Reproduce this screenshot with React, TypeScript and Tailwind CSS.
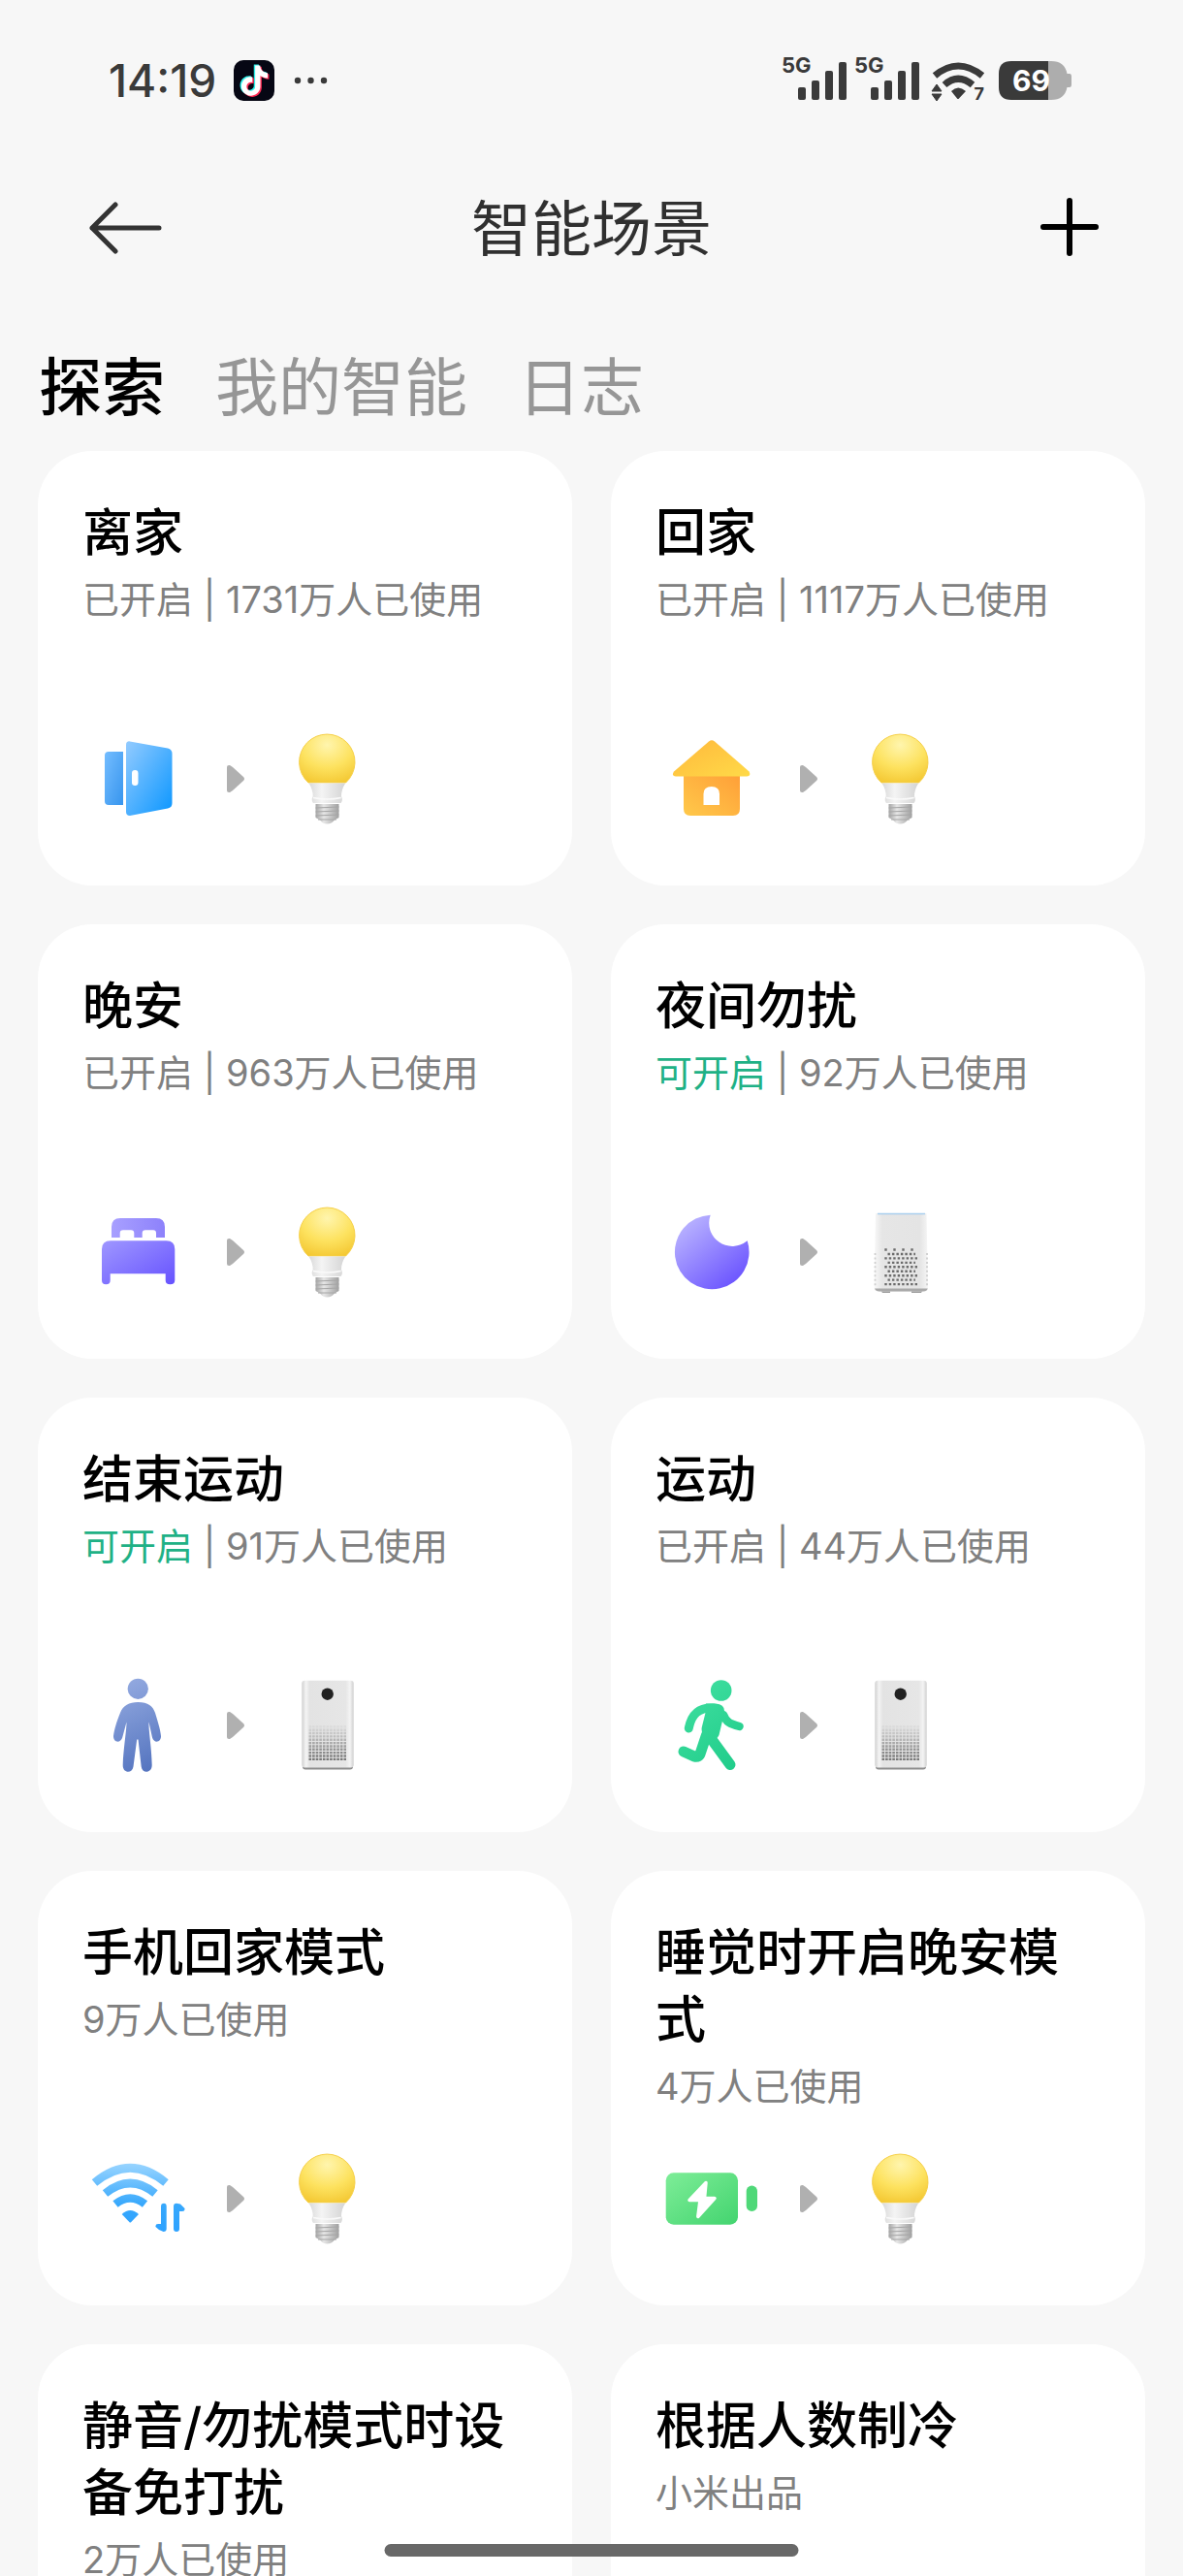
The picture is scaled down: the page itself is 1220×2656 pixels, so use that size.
import { useState, type ReactElement } from 'react'

type IconName =
	| 'door'
	| 'house'
	| 'bed'
	| 'moon'
	| 'person'
	| 'runner'
	| 'wifi'
	| 'battery'
	| 'bulb'
	| 'speaker'
	| 'purifier'

interface Scene {
	id: string
	title: string
	status?: 'on' | 'available'
	note: string
	from: IconName
	to: IconName
}

const tabs = ['探索', '我的智能', '日志']

const scenes: Scene[] = [
	{ id: 'leave', title: '离家', status: 'on', note: '1731万人已使用', from: 'door', to: 'bulb' },
	{ id: 'home', title: '回家', status: 'on', note: '1117万人已使用', from: 'house', to: 'bulb' },
	{ id: 'night', title: '晚安', status: 'on', note: '963万人已使用', from: 'bed', to: 'bulb' },
	{ id: 'dnd', title: '夜间勿扰', status: 'available', note: '92万人已使用', from: 'moon', to: 'speaker' },
	{ id: 'sport-end', title: '结束运动', status: 'available', note: '91万人已使用', from: 'person', to: 'purifier' },
	{ id: 'sport', title: '运动', status: 'on', note: '44万人已使用', from: 'runner', to: 'purifier' },
	{ id: 'phone-home', title: '手机回家模式', note: '9万人已使用', from: 'wifi', to: 'bulb' },
	{ id: 'sleep', title: '睡觉时开启晚安模式', note: '4万人已使用', from: 'battery', to: 'bulb' },
	{ id: 'mute', title: '静音/勿扰模式时设备免打扰', note: '2万人已使用', from: 'moon', to: 'speaker' },
	{ id: 'cooling', title: '根据人数制冷', note: '小米出品', from: 'person', to: 'purifier' }
]

const Door = () => (
	<>
		<defs>
			<linearGradient id="door-front" x1="0" y1="0" x2="1" y2="1">
				<stop offset="0" stopColor="#93cbff" />
				<stop offset="1" stopColor="#0a96ff" />
			</linearGradient>
			<linearGradient id="door-back" x1="0" y1="0" x2="1" y2="1">
				<stop offset="0" stopColor="#74bdff" />
				<stop offset="1" stopColor="#3795ee" />
			</linearGradient>
		</defs>
		<path d="M25 28H40V83H25Q21 83 21 79V32Q21 28 25 28Z" fill="url(#door-back)" />
		<path
			d="M47 17.4L86 24.4Q90.500 25.500 90.500 30V81Q90.500 85.500 86 86.500L47 94Q43 94 43 90V21Q43 17 47 17.400Z"
			fill="url(#door-front)"
		/>
		<rect x="49" y="47" width="6.500" height="16" rx="3.200" fill="#fff" />
	</>
)

const House = () => (
	<>
		<defs>
			<linearGradient id="house-roof" x1="0" y1="0" x2="1" y2="1">
				<stop offset="0" stopColor="#ffb83c" />
				<stop offset="1" stopColor="#ffda48" />
			</linearGradient>
			<linearGradient id="house-wall" x1="1" y1="0" x2="0" y2="1">
				<stop offset="0" stopColor="#ff9f38" />
				<stop offset="1" stopColor="#ffc94a" />
			</linearGradient>
		</defs>
		<path
			d="M27 52H85V87Q85 94 78 94H34Q27 94 27 87Z M47.500 83H64V71.500Q64 64 55.800 64Q47.500 64 47.500 71.500Z"
			fill="url(#house-wall)"
			fillRule="evenodd"
		/>
		<path
			d="M53 17.500Q56 15 59 17.500L94.500 48.500Q97 53 92 53.500H19Q14 53 17 48.500Z"
			fill="url(#house-roof)"
		/>
	</>
)

const Bed = () => (
	<>
		<defs>
			<linearGradient id="bed-fill" x1="0" y1="0" x2="1" y2="1">
				<stop offset="0" stopColor="#9f97ff" />
				<stop offset="1" stopColor="#6652ff" />
			</linearGradient>
			<linearGradient id="bed-head" x1="0" y1="0" x2="1" y2="0">
				<stop offset="0" stopColor="#a8a0ff" />
				<stop offset="1" stopColor="#8d81fb" />
			</linearGradient>
		</defs>
		<path
			d="M28 41V30Q28 21 37 21H74Q83 21 83 30V41H74V36.500Q74 33.300 71 33.300H63Q59.700 33.300 59.700 36.500V41H51.300V36.500Q51.300 33.300 48 33.300H40Q36.700 33.300 36.700 36.500V41Z"
			fill="url(#bed-head)"
		/>
		<path
			d="M18 53Q18 44.300 27 44.300H84.500Q93.300 44.300 93.300 53V85Q93.300 89.300 88.500 89.300Q83.700 89.300 83.700 85V78.300H26.700V85Q26.700 89.300 22.300 89.300Q18 89.300 18 85Z"
			fill="url(#bed-fill)"
		/>
	</>
)

const Moon = () => (
	<>
		<defs>
			<linearGradient id="moon-fill" x1="0.100" y1="0.100" x2="0.800" y2="0.950">
				<stop offset="0" stopColor="#bab4ff" />
				<stop offset="1" stopColor="#6b54ff" />
			</linearGradient>
		</defs>
		<path d="M54.700 17.700A24 24 0 0 0 92.700 44.300A38.300 38.300 0 1 1 54.700 17.700Z" fill="url(#moon-fill)" />
	</>
)

const Person = () => (
	<>
		<defs>
			<linearGradient id="person-fill" x1="30" y1="8" x2="75" y2="104" gradientUnits="userSpaceOnUse">
				<stop offset="0" stopColor="#97ade2" />
				<stop offset="1" stopColor="#5272be" />
			</linearGradient>
		</defs>
		<g fill="url(#person-fill)">
			<circle cx="55.300" cy="18.300" r="10.600" />
			<path d="M55.300 32C66 32 70.500 36 73 43C75.500 51 78.500 61 79 67C79.200 74 71.500 74.500 70 68.500L66.500 52.500C66 60 69.500 80 69.700 97C69.700 105.500 59.500 106 58.700 98.500L55.500 70.500H54.200L50.500 98.500C49.500 106 39.500 105.500 39.700 97C40.200 80 43.500 62 43.500 52.500L39.200 68.500C37.500 74.500 29.800 74 30 67C30.500 61 34 50 37 43C40 35.500 46 32 55.300 32Z" />
		</g>
	</>
)

const Runner = () => (
	<>
		<defs>
			<linearGradient id="runner-fill" x1="20" y1="20" x2="85" y2="100" gradientUnits="userSpaceOnUse">
				<stop offset="0" stopColor="#40dfa0" />
				<stop offset="1" stopColor="#20cc8a" />
			</linearGradient>
		</defs>
		<g fill="none" stroke="url(#runner-fill)" strokeLinecap="round" strokeLinejoin="round">
			<path d="M68 45C71 53 75 54.500 84.500 57" strokeWidth="8.500" />
			<path d="M50.500 66L44.500 84Q43 89.500 38 88L27 83" strokeWidth="11" />
			<path d="M58 38C42 37 35 45 32.300 59" strokeWidth="9" />
			<path d="M52 65L75 96.500" strokeWidth="11" />
		</g>
		<g fill="url(#runner-fill)">
			<circle cx="65.700" cy="20" r="10.800" />
			<path d="M50 33.500H60Q70 34 69 43L63.500 66Q59 75 51 69.500Q44 64 46 57L50 41Z" />
		</g>
	</>
)

const Wifi = () => (
	<>
		<defs>
			<linearGradient id="wifi-fill" x1="0" y1="20" x2="0" y2="90" gradientUnits="userSpaceOnUse">
				<stop offset="0" stopColor="#98d4ff" />
				<stop offset="0.600" stopColor="#37a8fc" />
				<stop offset="1" stopColor="#2ea2ff" />
			</linearGradient>
		</defs>
		<g fill="none" stroke="url(#wifi-fill)" strokeWidth="8.500">
			<path d="M10.500 39.500Q47.300 9 84 39.500" />
			<path d="M21.500 50.500Q47.300 29.500 73 50.500" />
			<path d="M32 61.500Q47.300 49.500 62.500 61.500" />
		</g>
		<g fill="url(#wifi-fill)">
			<path d="M38.700 72Q47.300 64 56 72L48.300 80Q47.300 81 46.300 80Z" />
			<path d="M82 60.700Q84.700 60.700 84.700 64V87Q84.700 90 81.500 90L77 88L73.500 85Q73 82 76 82H79V64Q79 60.700 82 60.700Z" />
			<path d="M92 64Q92 60.700 95 60.700L99 61.500L103.500 66Q104 69 101 69H98V87Q98 90 95 90Q92 90 92 87Z" />
		</g>
	</>
)

const Battery = () => (
	<>
		<defs>
			<linearGradient id="battery-fill" x1="0" y1="0" x2="1" y2="1">
				<stop offset="0" stopColor="#7eed98" />
				<stop offset="1" stopColor="#43d46f" />
			</linearGradient>
		</defs>
		<rect x="8.700" y="29.300" width="74.300" height="53.400" rx="8" fill="url(#battery-fill)" />
		<rect x="91.700" y="42.500" width="11.300" height="26.500" rx="5.600" fill="#4fd878" />
		<path
			d="M50 39.500L33 57.500H44L41.800 74.500L59 55.500H48.500Z"
			fill="#fff"
			stroke="#fff"
			strokeWidth="3.500"
			strokeLinejoin="round"
		/>
	</>
)

const Bulb = () => (
	<>
		<defs>
			<radialGradient id="bulb-glass" cx="0.500" cy="0.220" r="0.850">
				<stop offset="0" stopColor="#fff5ae" />
				<stop offset="0.550" stopColor="#fde25f" />
				<stop offset="1" stopColor="#f3c630" />
			</radialGradient>
			<linearGradient id="bulb-collar" x1="0" y1="0" x2="1" y2="0">
				<stop offset="0" stopColor="#d9d9d9" />
				<stop offset="0.350" stopColor="#f4f4f4" />
				<stop offset="1" stopColor="#d4d4d4" />
			</linearGradient>
			<linearGradient id="bulb-screw" x1="0" y1="0" x2="1" y2="0">
				<stop offset="0" stopColor="#a5a5a5" />
				<stop offset="0.350" stopColor="#e6e6e6" />
				<stop offset="1" stopColor="#a0a0a0" />
			</linearGradient>
		</defs>
		<path d="M37 60A28.700 28.700 0 1 1 75.600 60Z" fill="url(#bulb-glass)" stroke="#f6d04a" strokeWidth="1" />
		<path d="M37.500 60.500H75.200Q71 67 71 74Q73 78 70.500 81H42Q39.500 78 41.700 74Q41.700 67 37.500 60.500Z" fill="url(#bulb-collar)" />
		<path d="M42 75.500Q56.300 78.500 70.700 75.500" fill="none" stroke="#fafafa" strokeWidth="1.500" />
		<path d="M44.500 82H68.500V96L64 98.500Q61 102.500 56.300 102.500Q52 102.500 49 98.500L44.500 96Z" fill="url(#bulb-screw)" />
		<path d="M44.500 86L68.500 85M44.500 90L68.500 89M44.500 94L68.500 93M47 98H66" stroke="#a6a6a6" strokeWidth="1" />
	</>
)

const speakerRows = [0, 1, 2, 3, 4, 5, 6, 7, 8]

const Speaker = () => (
	<>
		<defs>
			<linearGradient id="speaker-body" x1="0" y1="0" x2="1" y2="0">
				<stop offset="0" stopColor="#f8f8f8" />
				<stop offset="0.150" stopColor="#e6e6e6" />
				<stop offset="0.850" stopColor="#e4e4e4" />
				<stop offset="1" stopColor="#f6f6f6" />
			</linearGradient>
		</defs>
		<path d="M36 95H46V98H38ZM68 95H80L78 98H68Z" fill="#9b9b9b" />
		<path d="M31 16H83.500L85 93Q85 96.500 81 96.500H34Q29.500 96.500 29.500 93Z" fill="url(#speaker-body)" />
		<path d="M30 93.500Q31 96.500 35 96.500H80Q84 96.500 84.700 93.500Z" fill="#a9a9a9" />
		<path d="M33 16.500H82" stroke="#a9cfee" strokeWidth="1.500" />
		{speakerRows.map((row) => (
			<path
				key={row}
				d={`M${row % 2 ? 43.500 : 40.300} ${53.500 + row * 4.450}H${row % 2 ? 72 : 75}`}
				stroke="#6b6b6b"
				strokeWidth="2.400"
				strokeDasharray={row === 0 ? '2.400 6.600' : '2.400 2.070'}
			/>
		))}
		<path d="M30.500 57V92M84 57V92" stroke="#cfcfcf" strokeWidth="1.800" strokeDasharray="2 2.450" />
	</>
)

const grilleLines = [0, 1, 2, 3, 4, 5, 6, 7, 8, 9, 10, 11]

const Purifier = () => (
	<>
		<defs>
			<linearGradient id="purifier-body" x1="0" y1="0" x2="1" y2="0">
				<stop offset="0" stopColor="#d0d0d0" />
				<stop offset="0.080" stopColor="#f4f4f4" />
				<stop offset="0.150" stopColor="#e3e3e3" />
				<stop offset="0.850" stopColor="#e6e6e6" />
				<stop offset="0.930" stopColor="#f4f4f4" />
				<stop offset="1" stopColor="#cfcfcf" />
			</linearGradient>
		</defs>
		<rect x="31" y="92" width="52" height="9.500" rx="3" fill="#8d8d8d" />
		<rect x="30.300" y="9.700" width="53.400" height="89.800" rx="3" fill="url(#purifier-body)" />
		<circle cx="56.700" cy="23.700" r="6.200" fill="#222" />
		{grilleLines.map((line) => (
			<path
				key={line}
				d={`M37.500 ${54 + line * 3.350}H76`}
				stroke="#6e6e6e"
				strokeOpacity={line / 12}
				strokeWidth="2.400"
				strokeDasharray="2.600 1"
			/>
		))}
	</>
)

const icons: Record<IconName, () => ReactElement> = {
	door: Door,
	house: House,
	bed: Bed,
	moon: Moon,
	person: Person,
	runner: Runner,
	wifi: Wifi,
	battery: Battery,
	bulb: Bulb,
	speaker: Speaker,
	purifier: Purifier
}

const SceneIcon = ({ name }: { name: IconName }) => {
	const Shape = icons[name]
	return (
		<svg className="size-28 shrink-0" viewBox="0 0 112 112" aria-hidden="true">
			<Shape />
		</svg>
	)
}

const SceneCard = ({ scene }: { scene: Scene }) => (
	<a
		href={`#${scene.id}`}
		className="flex min-h-[448px] flex-col justify-between rounded-[56px] bg-white px-[46px] pt-[50px] pb-[54px]"
	>
		<div>
			<h2 className="text-[52px] leading-[69px] font-medium text-black">{scene.title}</h2>
			<p className="mt-1.5 text-[38px] leading-[56px] text-[#808080]">
				{scene.status === 'on' && '已开启 | '}
				{scene.status === 'available' && (
					<>
						<span className="text-[#1fb186]">可开启</span>
						{' | '}
					</>
				)}
				{scene.note}
			</p>
		</div>
		<div className="flex items-center pl-0.5">
			<SceneIcon name={scene.from} />
			<svg className="h-8 w-[82px] shrink-0" viewBox="0 0 82 32" aria-hidden="true">
				<path d="M35 4Q35 1.500 38 2L41 4L52 14Q54 16 52 18L41 28L38 30Q35 30.500 35 28Z" fill="#b0b0b0" />
			</svg>
			<SceneIcon name={scene.to} />
		</div>
	</a>
)

const NOTE_PATH =
	'M12.525.02c1.31-.02 2.61-.01 3.91-.02.08 1.53.63 3.09 1.75 4.17 1.12 1.11 2.7 1.62 4.24 1.79v4.03c-1.44-.05-2.89-.35-4.2-.97-.57-.26-1.1-.59-1.62-.93-.01 2.92.01 5.84-.02 8.75-.08 1.4-.54 2.79-1.35 3.94-1.31 1.92-3.58 3.17-5.91 3.21-1.43.08-2.86-.31-4.08-1.03-2.02-1.19-3.44-3.37-3.65-5.71-.02-.5-.03-1-.01-1.49.18-1.9 1.12-3.72 2.58-4.96 1.66-1.44 3.98-2.13 6.15-1.72.02 1.48-.04 2.96-.04 4.44-.99-.32-2.15-.23-3.02.37-.63.41-1.11 1.04-1.36 1.75-.21.51-.15 1.07-.14 1.61.24 1.64 1.82 3.02 3.5 2.87 1.12-.01 2.19-.66 2.77-1.61.19-.33.4-.67.41-1.06.1-1.79.06-3.57.07-5.36.01-4.03-.01-8.05.02-12.07z'

const Signal = () => (
	<div className="relative h-11 w-[75px]">
		<span className="absolute -top-0.5 left-0 text-[22px] leading-4 font-bold">5G</span>
		<svg className="size-full" viewBox="0 0 75 44" fill="#3a3a3a" aria-hidden="true">
			<rect x="17" y="29" width="8" height="13" rx="2" />
			<rect x="31" y="22" width="8" height="20" rx="2" />
			<rect x="45" y="12" width="8" height="30" rx="2" />
			<rect x="59" y="3" width="8" height="39" rx="2" />
		</svg>
	</div>
)

const StatusBar = () => (
	<div className="flex h-32 shrink-0 items-center justify-between px-28 pt-[38px] text-[#3a3a3a]">
		<div className="flex items-center">
			<span className="text-[46px] leading-[48px] font-medium">14:19</span>
			<svg className="ml-[18px] size-[42px]" viewBox="0 0 42 42" aria-hidden="true">
				<rect width="42" height="42" rx="10" fill="#060714" />
				<path d={NOTE_PATH} fill="#2ff0ea" transform="translate(4.500 4.500) scale(1.300)" />
				<path d={NOTE_PATH} fill="#fe2c55" transform="translate(7.300 6.700) scale(1.300)" />
				<path d={NOTE_PATH} fill="#fff" transform="translate(5.900 5.500) scale(1.300)" />
			</svg>
			<svg className="ml-5 h-2 w-9" viewBox="0 0 36 8" fill="#3a3a3a" aria-hidden="true">
				<circle cx="4" cy="4" r="3.200" />
				<circle cx="17.500" cy="4" r="3.200" />
				<circle cx="31" cy="4" r="3.200" />
			</svg>
		</div>
		<div className="flex items-center">
			<Signal />
			<Signal />
			<div className="relative h-11 w-[72px]">
				<svg className="size-full" viewBox="0 0 72 44" aria-hidden="true">
					<g fill="none" stroke="#3a3a3a" strokeWidth="7">
						<path d="M8 17Q32 -3 57 17" />
						<path d="M18 26.500Q32 14 47 26.500" />
					</g>
					<path d="M25 33Q32 26 40 33L33 40.500Q32 41.500 31 40.500Z" fill="#3a3a3a" />
					<path d="M5 33L10 26L15 33ZM5 36H15L10 43Z" fill="#3a3a3a" stroke="#3a3a3a" strokeLinejoin="round" />
				</svg>
				<span className="absolute right-[13px] bottom-0 text-[18px] leading-4 font-bold">7</span>
			</div>
			<div className="relative h-11 w-20">
				<svg className="size-full" viewBox="0 0 80 44" aria-hidden="true">
					<path d="M53 2H56Q70 2 72.500 15H75Q77 15 77 18V26Q77 29 75 29H72.500Q70 42 56 42H53Z" fill="#adadad" />
					<path d="M15 2H53V42H15Q2 42 2 29V15Q2 2 15 2Z" fill="#3a3a3a" />
				</svg>
				<span className="absolute top-0 left-4 text-[30px] leading-[44px] font-bold text-white">69</span>
			</div>
		</div>
	</div>
)

const App = () => {
	const [activeTab, setActiveTab] = useState('探索')

	return (
		<div className="relative flex h-screen flex-col overflow-hidden bg-[#f7f7f7] font-['Inter','Noto_Sans_CJK_SC',sans-serif]">
			<StatusBar />

			{/* Title bar */}
			<header className="flex h-[214px] shrink-0 items-center justify-between px-20">
				<button type="button" aria-label="返回">
					<svg className="h-16 w-24" viewBox="0 0 96 64" fill="none" stroke="#333" strokeWidth="5" aria-hidden="true">
						<path d="M39 8L15 32L39 56M15 32H84" strokeLinecap="round" strokeLinejoin="round" />
					</svg>
				</button>
				<h1 className="pt-1 text-[62px] leading-[80px] text-[#303030]">智能场景</h1>
				<button type="button" aria-label="添加">
					<svg className="h-16 w-24" viewBox="0 0 96 64" stroke="#000" strokeWidth="6" strokeLinecap="round" aria-hidden="true">
						<path d="M59 4V58M32 31H86" />
					</svg>
				</button>
			</header>

			<nav className="flex h-28 shrink-0 items-center gap-[52px] px-10 pt-1">
				{tabs.map((tab) => (
					<button
						type="button"
						key={tab}
						onClick={() => setActiveTab(tab)}
						className={`text-[65px] leading-[80px] ${
							activeTab === tab ? 'font-medium text-black' : 'text-[#969696]'
						}`}
					>
						{tab}
					</button>
				))}
			</nav>

			{/* Scene grid */}
			<main className="grid min-h-0 flex-1 grid-cols-2 content-start gap-10 overflow-y-auto px-[39px] pt-[11px] pb-10 [scrollbar-width:none]">
				{scenes.map((scene) => (
					<SceneCard key={scene.id} scene={scene} />
				))}
			</main>

			<div className="absolute bottom-5 left-1/2 h-[13px] w-[35%] -translate-x-1/2 rounded-full bg-[#686868]" />
		</div>
	)
}

export default App
